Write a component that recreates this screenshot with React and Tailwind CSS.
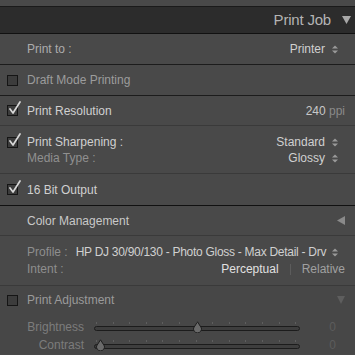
import React from "react";

const font = { fontFamily: '"Liberation Sans", Arial, sans-serif' };

function Arrows({ className = "" }) {
  return (
    <svg width="6" height="9" viewBox="0 0 6 9" className={className}>
      <path d="M0 3.5 L3 0.5 L6 3.5 Z" fill="#9a9a9a" />
      <path d="M0 5.5 L3 8.5 L6 5.5 Z" fill="#9a9a9a" />
    </svg>
  );
}

function Box({ checked }) {
  return (
    <div className="relative w-[11px] h-[11px] shrink-0">
      <div className="absolute inset-0 border border-[#151515] bg-[#3c3c3c]" />
      {checked && (
        <svg width="14" height="14" viewBox="0 0 14 14" className="absolute left-[1px] top-[-4px]">
          <path d="M2 8 L5 12 L12 1" stroke="#d8d8d8" strokeWidth="1.7" fill="none" strokeLinecap="round" strokeLinejoin="round" />
        </svg>
      )}
    </div>
  );
}

function Slider({ label, pos }) {
  const ticks = Array.from({ length: 13 }, (_, i) => i);
  return (
    <div className="flex items-center h-[18px]">
      <div className="w-[84px] text-right text-[12px] text-[#7c7c7c]">{label}</div>
      <div className="relative ml-[10px] w-[206px] h-[11px]">
        {ticks.map((i) => (
          <div key={i} className="absolute top-0 w-px h-[2px] bg-[#5e5e5e]" style={{ left: 2 + i * 16.6 }} />
        ))}
        <div className="absolute left-0 right-0 top-[4px] h-[5px] rounded-full border border-[#1c1c1c] bg-[#3e3e3e]" />
        <svg width="11" height="12" viewBox="0 0 11 12" className="absolute top-[-1px]" style={{ left: pos - 5 }}>
          <path d="M5.5 0.8 L9.4 7 A4 4 0 1 1 1.6 7 Z" fill="#6a6a6a" stroke="#1e1e1e" strokeWidth="1" />
        </svg>
      </div>
      <div className="ml-auto mr-[19px] text-[12px] text-[#5c5c5c]">0</div>
    </div>
  );
}

export default function App() {
  return (
    <div className="w-[355px] h-[355px] overflow-hidden bg-[#494949] text-[12px]" style={font}>
      <div className="h-[6px] bg-[#494949] border-b border-[#1a1a1a] box-content" />
      <div className="h-[26px] bg-[#2c2c2c] border-b border-[#111] box-content flex items-center justify-end pr-[4px]">
        <span className="text-[15px] text-[#b4b4b4] tracking-[-0.2px]">Print Job</span>
        <svg width="9" height="8" viewBox="0 0 9 8" className="ml-[11px]">
          <path d="M0 0 L9 0 L4.5 8 Z" fill="#a8a8a8" />
        </svg>
      </div>
      <div className="h-[30px] border-b border-[#1c1c1c] box-content flex items-center pl-[27px] pr-[17px]">
        <span className="text-[#acacac]">Print to :</span>
        <span className="ml-auto text-[#d0d0d0]">Printer</span>
        <Arrows className="ml-[7px]" />
      </div>
      <div className="h-[30px] border-b border-[#1c1c1c] box-content flex items-center pl-[7px]">
        <Box />
        <span className="ml-[9px] text-[#9c9c9c]">Draft Mode Printing</span>
      </div>
      <div className="h-[29px] border-b border-[#3a3a3a] box-content flex items-center pl-[7px] pr-[10px]">
        <Box checked />
        <span className="ml-[9px] text-[#d0d0d0]">Print Resolution</span>
        <span className="ml-auto text-[#c8c8c8]">240 <span className="text-[#8a8a8a]">ppi</span></span>
      </div>
      <div className="h-[47px] border-b border-[#3a3a3a] box-content flex flex-col justify-center pl-[7px] pr-[17px]">
        <div className="flex items-center h-[16px] mt-[1px]">
          <Box checked />
          <span className="ml-[9px] text-[#d0d0d0]">Print Sharpening :</span>
          <span className="ml-auto text-[#d0d0d0]">Standard</span>
          <Arrows className="ml-[7px]" />
        </div>
        <div className="flex items-center h-[16px] pl-[20px]">
          <span className="text-[#909090]">Media Type :</span>
          <span className="ml-auto text-[#d0d0d0]">Glossy</span>
          <Arrows className="ml-[7px]" />
        </div>
      </div>
      <div className="h-[31px] border-b border-[#111] box-content flex items-center pl-[7px]">
        <Box checked />
        <span className="ml-[9px] text-[#d0d0d0]">16 Bit Output</span>
      </div>
      <div className="h-[29px] border-b border-[#3a3a3a] box-content flex items-center pl-[27px] pr-[10px]">
        <span className="text-[#c8c8c8]">Color Management</span>
        <svg width="8" height="9" viewBox="0 0 8 9" className="ml-auto">
          <path d="M8 0 L8 9 L0 4.5 Z" fill="#8a8a8a" />
        </svg>
      </div>
      <div className="h-[49px] border-b border-[#3a3a3a] box-content flex flex-col justify-center pl-[27px] pr-[10px]">
        <div className="flex items-center h-[17px] whitespace-nowrap">
          <span className="text-[#8e8e8e] shrink-0">Profile :</span>
          <span className="ml-[8px] text-[#d0d0d0] tracking-[-0.28px]">HP DJ 30/90/130 - Photo Gloss - Max Detail - Drv</span>
          <Arrows className="ml-[6px] shrink-0" />
        </div>
        <div className="flex items-center h-[17px] whitespace-nowrap">
          <span className="text-[#8e8e8e]">Intent :</span>
          <span className="ml-auto text-[#e0e0e0]">Perceptual</span>
          <span className="mx-[11px] w-px h-[11px] bg-[#5c5c5c]" />
          <span className="text-[#a0a0a0]">Relative</span>
        </div>
      </div>
      <div className="bg-[#474747] flex flex-col">
        <div className="h-[28px] flex items-center pl-[7px] pr-[10px]">
          <Box />
          <span className="ml-[9px] text-[#9a9a9a]">Print Adjustment</span>
          <svg width="8" height="8" viewBox="0 0 8 8" className="ml-auto">
            <path d="M0 0 L8 0 L4 8 Z" fill="#5e5e5e" />
          </svg>
        </div>
        <div className="flex flex-col pt-[4px]">
          <Slider label="Brightness" pos={103} />
          <Slider label="Contrast" pos={6} />
        </div>
      </div>
    </div>
  );
}
